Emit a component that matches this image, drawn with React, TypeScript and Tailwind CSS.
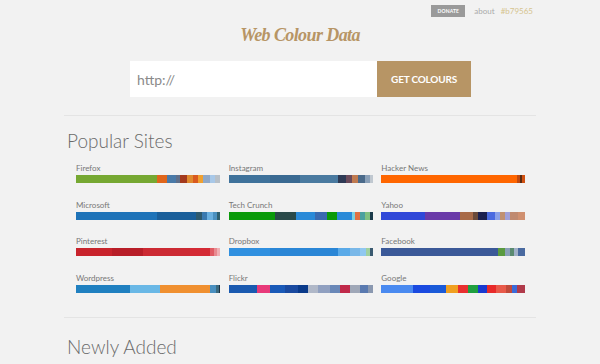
import React from 'react'

type Seg = [string, number]

// barras de colores de cada sitio: [color, ancho en px]
const sites: { name: string; segs: Seg[] }[] = [
  { name: 'Firefox', segs: [['#76a832', 81], ['#e0661b', 10], ['#4a7aa8', 9], ['#5f6f8a', 4], ['#a33a1e', 7], ['#e08a2e', 6], ['#d95a20', 5], ['#f0a030', 5], ['#8fa8c8', 7], ['#a8c8e8', 5], ['#b8c0c8', 5]] },
  { name: 'Instagram', segs: [['#3f729b', 41], ['#3a6a92', 30], ['#4a7aa0', 38], ['#2e3a55', 8], ['#6a4a5a', 6], ['#c07a50', 6], ['#4a6a8a', 7], ['#8aa0b8', 5], ['#c0c8d0', 3]] },
  { name: 'Hacker News', segs: [['#ff6600', 135], ['#c04a10', 3], ['#5a2a10', 2], ['#d05010', 3]] },
  { name: 'Microsoft', segs: [['#1e73b8', 81], ['#1a5f9a', 39], ['#2e5a6e', 6], ['#3a7ab0', 5], ['#6ab0e0', 6], ['#4a90c0', 4], ['#2e6070', 3]] },
  { name: 'Tech Crunch', segs: [['#0a9a0a', 46], ['#2a4a4a', 21], ['#2a8ad8', 19], ['#3a6ab0', 12], ['#0a9a0a', 10], ['#2a8ad8', 15], ['#7ad0e0', 3], ['#e07040', 5], ['#4aa0a0', 5], ['#80c080', 5], ['#1a3a4a', 3]] },
  { name: 'Yahoo', segs: [['#3048d8', 43], ['#6a3aa8', 35], ['#a86a48', 13], ['#6a4a3a', 5], ['#1a2050', 9], ['#4a6ae0', 8], ['#8aa0e8', 5], ['#c09070', 5], ['#a0a0d8', 5], ['#c08a70', 8], ['#d09070', 7]] },
  { name: 'Pinterest', segs: [['#c8232c', 36], ['#b81e28', 31], ['#cc2a33', 47], ['#d42a35', 20], ['#e05a63', 4], ['#e88a90', 3], ['#f0b0b5', 3]] },
  { name: 'Dropbox', segs: [['#3090e0', 41], ['#2a86d6', 68], ['#5aaae8', 12], ['#7ab8e8', 10], ['#90c8f0', 6], ['#a0d0a0', 4], ['#3a5a70', 3]] },
  { name: 'Facebook', segs: [['#3b5998', 116], ['#5a9a40', 7], ['#8aa0b8', 5], ['#5a8a70', 4], ['#a0b0c8', 4], ['#4a6aa0', 7]] },
  { name: 'Wordpress', segs: [['#2080c0', 54], ['#6ab8e6', 30], ['#f09030', 50], ['#4a90c0', 6], ['#3a6a80', 3], ['#203040', 1]] },
  { name: 'Flickr', segs: [['#1a5ab0', 28], ['#e83a7a', 13], ['#1a5ab8', 15], ['#1a4aa0', 13], ['#0a3a8a', 10], ['#b0b8c8', 10], ['#90a0c0', 12], ['#6a88b8', 10], ['#c02a4a', 10], ['#a0a8b8', 10], ['#5a7ab0', 8], ['#8a98b0', 5]] },
  { name: 'Google', segs: [['#4a8af0', 31], ['#1a4ae0', 17], ['#1a5ad8', 16], ['#f0a020', 12], ['#e83030', 10], ['#20a040', 10], ['#1a3ad0', 9], ['#e82a2a', 9], ['#e85a4a', 10], ['#c04a3a', 6], ['#3a6ad8', 5], ['#b03a4a', 8]] },
]

export default function App() {
  return (
    <div className="h-[364px] overflow-hidden bg-[#f2f2f2] font-['Lato',sans-serif] text-[#666]">
      {/* barra superior */}
      <div className="flex justify-end items-center gap-[9px] pt-[5px] pr-[67px] h-[17px]">
        <span className="bg-[#9a9a9a] text-white text-[5px] leading-[12px] h-[12px] w-[34px] text-center font-bold tracking-wide">DONATE</span>
        <span className="flex gap-[6px] text-[8px] leading-[12px]">
          <span className="text-[#aaa]">about</span>
          <span className="text-[#d6c48e]">#b79565</span>
        </span>
      </div>

      <h1 className="text-center mt-[6px] h-[24px] leading-[24px] text-[18px] font-bold italic text-[#b79565] font-['Liberation_Serif',serif] tracking-[-0.6px]">
        Web Colour Data
      </h1>

      <div className="flex justify-center mt-[14px] pl-[1px]">
        <div className="w-[247px] h-[36px] bg-white flex items-center pl-[7px] text-[14px] text-[#8a8a8a]">http://</div>
        <div className="w-[94px] h-[36px] bg-[#b79565] flex items-center justify-center text-white text-[10px] font-bold tracking-[-0.2px]">GET COLOURS</div>
      </div>

      <div className="w-[472px] mx-auto mt-[18px] border-t border-[#e4e4e4]">
        <h2 className="pl-[3px] mt-[12px] text-[19px] leading-[26px] font-light text-[#6a6a6a]">Popular Sites</h2>

        <div className="grid grid-cols-3 gap-x-[9px] gap-y-[16.5px] pl-[12px] pr-[11px] mt-[9px]">
          {sites.map(s => (
            <div key={s.name}>
              <p className="text-[8px] leading-[10px] text-[#777] h-[10px]">{s.name}</p>
              <div className="flex h-[8px] mt-[2px] w-[144px]">
                {s.segs.map((g, i) => (
                  <div key={i} style={{ background: g[0], flexGrow: g[1], flexBasis: 0 }} />
                ))}
              </div>
            </div>
          ))}
        </div>

        <div className="mt-[24px] border-t border-[#e4e4e4]" />
        <h2 className="pl-[3px] mt-[16px] text-[19px] leading-[26px] font-light text-[#6a6a6a]">Newly Added</h2>
      </div>
    </div>
  )
}
